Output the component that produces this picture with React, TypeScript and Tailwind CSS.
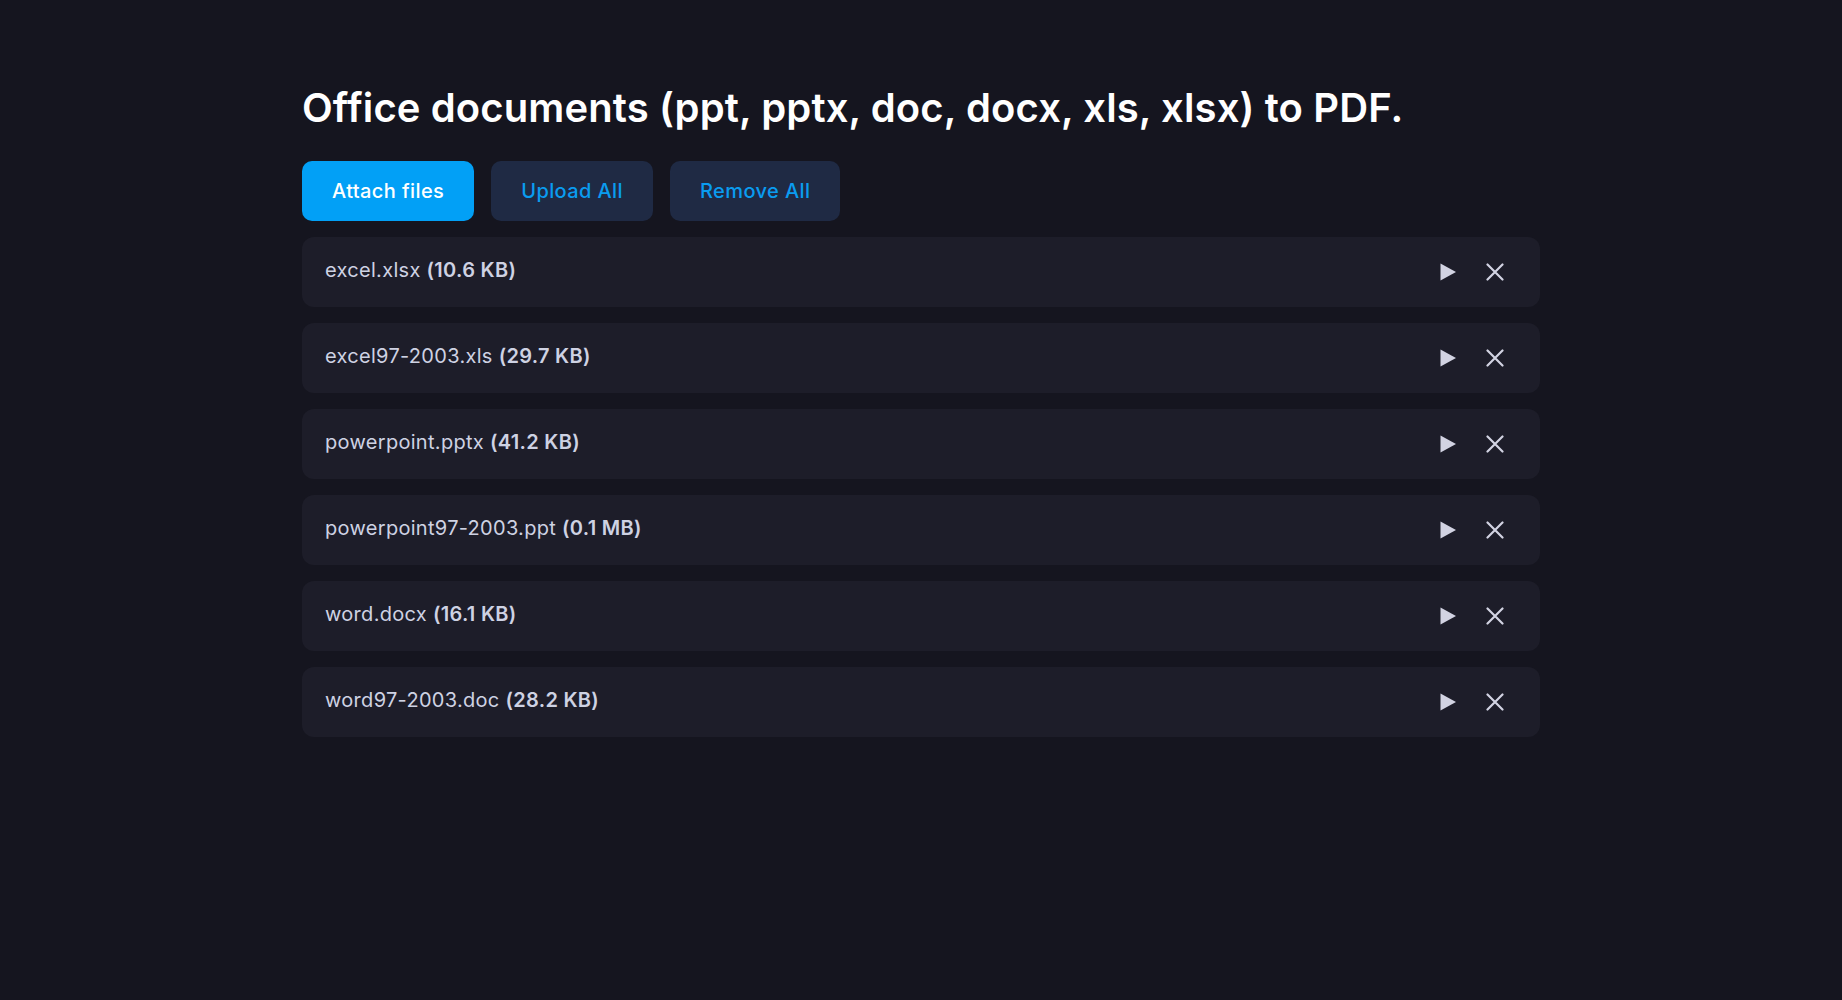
import { useState } from 'react'

type FileItem = {
  name: string
  size: string
}

const initialFiles: FileItem[] = [
  { name: 'excel.xlsx', size: '10.6 KB' },
  { name: 'excel97-2003.xls', size: '29.7 KB' },
  { name: 'powerpoint.pptx', size: '41.2 KB' },
  { name: 'powerpoint97-2003.ppt', size: '0.1 MB' },
  { name: 'word.docx', size: '16.1 KB' },
  { name: 'word97-2003.doc', size: '28.2 KB' },
]

function PlayIcon() {
  return (
    <svg width="16" height="18" viewBox="0 0 16 18" fill="currentColor">
      <path d="M0.5 0.6 L16 9 L0.5 17.4 Z" />
    </svg>
  )
}

function CloseIcon() {
  return (
    <svg width="18" height="18" viewBox="0 0 18 18" fill="none" stroke="currentColor" strokeWidth="2.2" strokeLinecap="round">
      <path d="M1.5 1.5 L16.5 16.5 M16.5 1.5 L1.5 16.5" />
    </svg>
  )
}

export default function App() {
  const [files, setFiles] = useState<FileItem[]>(initialFiles)

  return (
    <div
      className="min-h-screen bg-[#15151f] text-white"
      style={{ fontFamily: 'Inter, "Noto Sans", sans-serif' }}
    >
      <div className="mx-auto max-w-[1238px] pt-[84px]">
        <h1 className="text-[40px] leading-[48px] font-semibold tracking-[0.12px] text-white">
          Office documents (ppt, pptx, doc, docx, xls, xlsx) to PDF.
        </h1>

        <div className="mt-[29px] flex gap-[17px]">
          <button className="h-[60px] rounded-[10px] bg-[#02a0f6] px-[30px] text-xl font-medium tracking-[0.4px] text-white">
            Attach files
          </button>
          <button className="h-[60px] rounded-[10px] bg-[#1f2a44] px-[30px] text-xl font-medium tracking-[0.4px] text-[#0a9cf0]">
            Upload All
          </button>
          <button className="h-[60px] rounded-[10px] bg-[#1f2a44] px-[30px] text-xl font-medium tracking-[0.4px] text-[#0a9cf0]">
            Remove All
          </button>
        </div>

        <div className="mt-4 flex flex-col gap-4">
          {files.map((f) => (
            <div
              key={f.name}
              className="flex h-[70px] items-center justify-between rounded-xl bg-[#1d1d29] pl-[23px] pr-9"
            >
              <p className="-mt-1 text-xl tracking-[0.3px] text-[#ced2e3]">
                {f.name} <span className="font-semibold">({f.size})</span>
              </p>
              <div className="flex items-center gap-[30px] text-[#d2d3e2]">
                <button>
                  <PlayIcon />
                </button>
                <button onClick={() => setFiles((prev) => prev.filter((x) => x.name !== f.name))}>
                  <CloseIcon />
                </button>
              </div>
            </div>
          ))}
        </div>
      </div>
    </div>
  )
}
